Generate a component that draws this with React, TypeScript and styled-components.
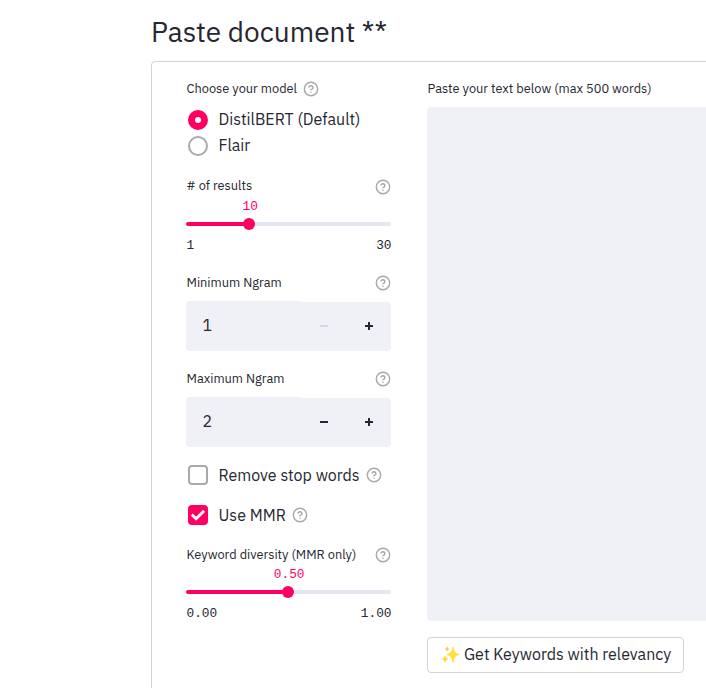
import React from "react";
import styled, { createGlobalStyle } from "styled-components";

const pink = "#ff0062";
const ink = "#262730";
const field = "#f0f1f6";

const GlobalStyle = createGlobalStyle`
  * { box-sizing: border-box; }
  html, body { margin: 0; overflow: hidden; background: #fff; }
  body { font-family: "IBM Plex Sans", Roboto, "Liberation Sans", sans-serif; color: ${ink}; }
`;

const Page = styled.main`
  height: 688px;
  padding-left: 151px;
  overflow: hidden;
`;
const Title = styled.h1`
  margin: 0;
  height: 61px;
  padding-top: 12px;
  font-size: 28px;
  line-height: 40px;
  font-weight: 400;
  white-space: nowrap;
`;
const Card = styled.form`
  width: 760px;
  height: 760px;
  border: 1px solid #d3d3d6;
  border-radius: 4px;
  padding: 16px 34px;
  display: grid;
  grid-template-columns: 205px 1fr;
  column-gap: 36px;
`;
const Column = styled.div`
  display: flex;
  flex-direction: column;
  min-width: 0;
`;
const Group = styled.section<{ $h: number }>`
  height: ${(p) => p.$h}px;
  flex: none;
`;
const LabelRow = styled.div<{ $spread?: boolean; $raise?: boolean }>`
  display: flex;
  align-items: center;
  justify-content: ${(p) => (p.$spread ? "space-between" : "flex-start")};
  gap: 6px;
  height: 20px;
  svg { margin-top: 2px; }
  label { padding-top: ${(p) => (p.$raise ? 0 : 2)}px; }
`;
const Label = styled.label`
  padding-left: 0.5px;
  font-size: 12.8px;
  line-height: 20px;
  white-space: nowrap;
`;
const Options = styled.div`
  padding-top: 9px;
`;
const OptionText = styled.span`
  margin: 0 6.5px 0 10.5px;
  font-size: 16px;
  line-height: 24px;
  white-space: nowrap;
`;
const Option = styled.div<{ $h: number }>`
  height: ${(p) => p.$h}px;
  display: flex;
  align-items: center;
  padding-left: 2px;
`;
const RadioOption = styled(Option)`
  ${OptionText} { padding-bottom: 2px; }
`;
const Radio = styled.span<{ $on?: boolean }>`
  width: 20px;
  height: 20px;
  border-radius: 50%;
  background: #fff;
  border: ${(p) => (p.$on ? `7px solid ${pink}` : "2px solid #a8a9ad")};
`;
const Check = styled.span<{ $on?: boolean }>`
  width: 20px;
  height: 20px;
  border-radius: 4px;
  display: grid;
  place-items: center;
  background: ${(p) => (p.$on ? pink : "#fff")};
  border: 2px solid ${(p) => (p.$on ? pink : "#a8a9ad")};
`;
const Mono = styled.span`
  font-family: "Liberation Mono", monospace;
  font-size: 12.8px;
  line-height: 18px;
`;
const Value = styled(Mono)`
  display: block;
  width: 60px;
  margin-top: 2px;
  text-align: center;
  color: ${pink};
`;
const Track = styled.div`
  height: 12px;
  margin-top: 2px;
  display: flex;
  align-items: center;
`;
const Filled = styled.div`
  height: 4px;
  border-radius: 2px 0 0 2px;
  background: ${pink};
`;
const Thumb = styled.div`
  width: 12px;
  height: 12px;
  border-radius: 50%;
  margin: 0 -6px;
  background: ${pink};
  z-index: 1;
`;
const Rest = styled.div`
  flex: 1;
  height: 4px;
  border-radius: 0 2px 2px 0;
  background: #e4e6f0;
`;
const Ends = styled.div`
  display: flex;
  justify-content: space-between;
  margin: 7px -0.5px 0 0.5px;
`;
const NumberBox = styled.div`
  display: grid;
  grid-template-columns: 115px 45px 45px;
  align-items: end;
  height: 50px;
  margin-top: 9px;
`;
const NumberValue = styled.div`
  height: 50px;
  border-radius: 4px 0 0 4px;
  background: ${field};
  padding-left: 16.5px;
  font-size: 16px;
  line-height: 49px;
`;
const Step = styled.div<{ $last?: boolean; $off?: boolean }>`
  height: 49px;
  display: flex;
  align-items: center;
  justify-content: center;
  padding: 0 0 1px 1px;
  background: ${field};
  border-radius: ${(p) => (p.$last ? "0 4px 4px 0" : "0")};
  color: ${(p) => (p.$off ? "#d6d8e4" : ink)};
`;
const TextArea = styled.div`
  height: 514px;
  margin-top: 9px;
  border-radius: 4px;
  background: ${field};
`;
const Button = styled.div`
  width: 257px;
  height: 36px;
  margin-top: 16px;
  padding: 0 0 2px 13px;
  border: 1px solid #d3d3d6;
  border-radius: 4px;
  display: flex;
  align-items: center;
  gap: 4px;
  font-size: 16px;
  white-space: nowrap;
`;

const Help = () => (
  <svg width="16" height="16" viewBox="0 0 24 24" fill="none" stroke="#a8a9ad" strokeWidth="2.2" strokeLinecap="round" strokeLinejoin="round">
    <circle cx="12" cy="12" r="10" />
    <path d="M9.09 9a3 3 0 0 1 5.83 1c0 2-3 3-3 3" />
    <path d="M12 17h.01" />
  </svg>
);

const Sparkles = () => (
  <svg width="19" height="19" viewBox="0 0 19 19">
    <path d="M12 1.8Q12.9 8.5 18.2 9.5Q12.9 10.5 12 17.4Q11.1 10.5 5.8 9.5Q11.1 8.5 12 1.8Z" fill="#fde03a" stroke="#fde03a" strokeWidth=".7" />
    <path d="M4 10.8Q4.5 13.3 7 14Q4.5 14.7 4 17.4Q3.5 14.7 1 14Q3.5 13.3 4 10.8Z" fill="#fdd835" stroke="#fdd835" strokeWidth=".4" />
    <path d="M6.2 1.7Q6.5 3.6 8.2 4Q6.5 4.4 6.2 6.3Q5.9 4.4 4.2 4Q5.9 3.6 6.2 1.7Z" fill="#f6c343" stroke="#f6c343" strokeWidth=".3" />
  </svg>
);

type SliderProps = { label: string; value: string; min: string; max: string; at: number; h: number; raise?: boolean };
const Slider = ({ label, value, min, max, at, h, raise }: SliderProps) => (
  <Group $h={h}>
    <LabelRow $spread $raise={raise}>
      <Label>{label}</Label>
      <Help />
    </LabelRow>
    <Value style={{ marginLeft: at - 29 }}>{value}</Value>
    <Track>
      <Filled style={{ width: at }} />
      <Thumb />
      <Rest />
    </Track>
    <Ends>
      <Mono>{min}</Mono>
      <Mono>{max}</Mono>
    </Ends>
  </Group>
);

type StepperProps = { label: string; value: number; min?: boolean; h: number };
const Stepper = ({ label, value, min, h }: StepperProps) => (
  <Group $h={h}>
    <LabelRow $spread>
      <Label>{label}</Label>
      <Help />
    </LabelRow>
    <NumberBox>
      <NumberValue>{value}</NumberValue>
      <Step $off={min}>
        <svg width="8" height="8" viewBox="0 0 8 8"><path d="M0 4h8" stroke="currentColor" strokeWidth="2" /></svg>
      </Step>
      <Step $last>
        <svg width="8" height="8" viewBox="0 0 8 8"><path d="M0 4h8M4 0v8" stroke="currentColor" strokeWidth="2" /></svg>
      </Step>
    </NumberBox>
  </Group>
);

export default function App() {
  return (
    <Page>
      <GlobalStyle />
      <Title>Paste document **</Title>
      <Card>
        <Column>
          <Group $h={98}>
            <LabelRow>
              <Label>Choose your model</Label>
              <Help />
            </LabelRow>
            <Options>
              <RadioOption $h={26}><Radio $on /><OptionText>DistilBERT (Default)</OptionText></RadioOption>
              <RadioOption $h={26}><Radio /><OptionText>Flair</OptionText></RadioOption>
            </Options>
          </Group>
          <Slider label="# of results" value="10" min="1" max="30" at={63.2} h={96} raise />
          <Stepper label="Minimum Ngram" value={1} min h={96} />
          <Stepper label="Maximum Ngram" value={2} h={87} />
          <Option $h={40}><Check /><OptionText>Remove stop words</OptionText><Help /></Option>
          <Option $h={40}>
            <Check $on>
              <svg width="14" height="12" viewBox="0 0 14 12"><path d="M.8 5.6l4.3 4.2 8-8" fill="none" stroke="#fff" strokeWidth="2.8" /></svg>
            </Check>
            <OptionText>Use MMR</OptionText>
            <Help />
          </Option>
          <Group $h={9} />
          <Slider label="Keyword diversity (MMR only)" value="0.50" min="0.00" max="1.00" at={102.2} h={90} />
        </Column>
        <Column>
          <LabelRow><Label>Paste your text below (max 500 words)</Label></LabelRow>
          <TextArea />
          <Button><Sparkles /><span>Get Keywords with relevancy</span></Button>
        </Column>
      </Card>
    </Page>
  );
}
